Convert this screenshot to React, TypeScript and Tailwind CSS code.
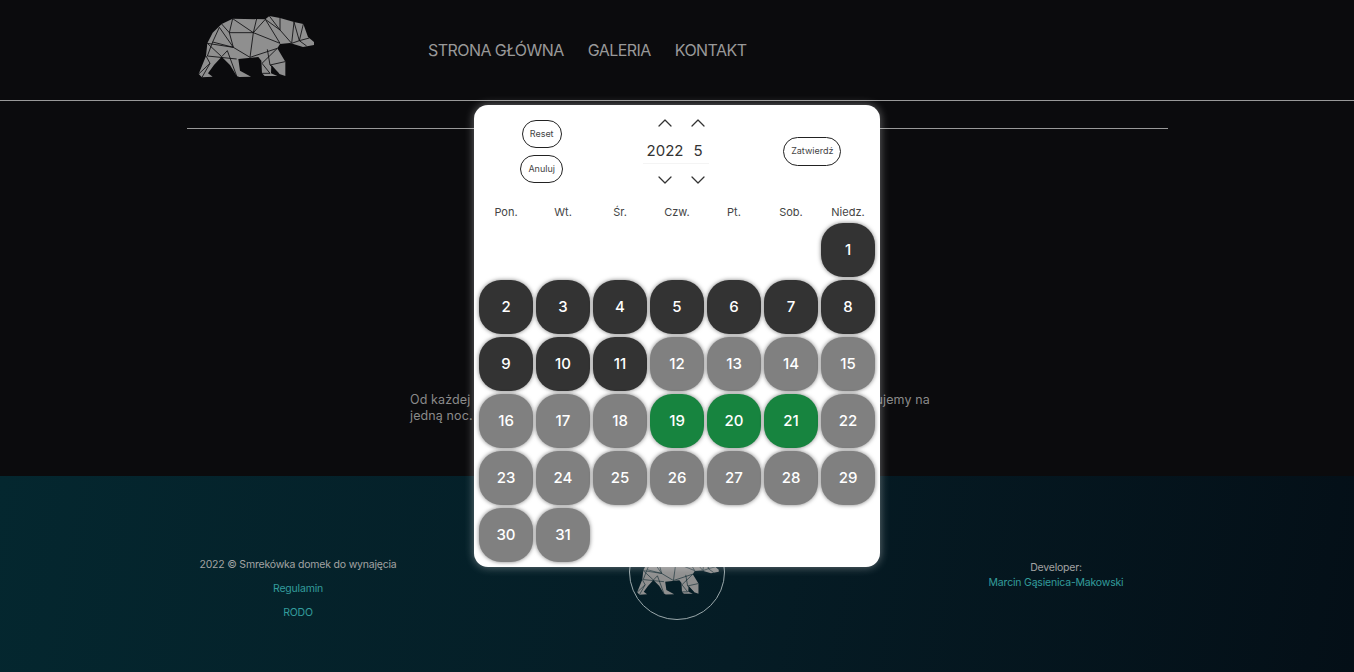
import React from 'react';
import { ChevronUp, ChevronDown } from 'lucide-react';

const weekDays = ['Pon.', 'Wt.', 'Śr.', 'Czw.', 'Pt.', 'Sob.', 'Niedz.'];
const days = Array.from({ length: 31 }, (_, i) => i + 1);

const dayColor = (day: number): string => {
  if (day >= 19 && day <= 21) return 'bg-[#17843f]';
  if (day <= 11) return 'bg-[#333333]';
  return 'bg-[#808080]';
};

// Low-poly bear, traced from the logo
const BearLogo = ({ className, line }: { className: string; line: string }) => (
  <svg viewBox="0 0 390 216" className={className} aria-hidden="true">
    <path
      fill="#8f8f8f"
      d="M372 96 L354 81 L340 42 L312 36 L270 24 L238 18 L226 28 L128 26 L95 42 L68 68 L52 100 L48 138 L26 192 L36 202 L68 200 L54 190 L72 165 L95 140 L120 165 L140 198 L148 201 L183 200 L150 182 L145 147 L205 141 L214 152 L216 190 L224 198 L262 198 L243 190 L244 164 L268 192 L286 198 L286 155 L262 115 L270 102 L300 99 L339 111 L372 105 Z"
    />
    <path
      fill="none"
      stroke={line}
      strokeWidth="2.5"
      d="M128 26 L118 68 L95 42 M128 26 L190 68 L200 26 M190 68 L226 28 L270 100 L190 68 M118 68 L190 68 L180 142 M118 68 L130 112 L88 52 M130 112 L180 142 L262 115 M130 112 L52 100 M88 52 L68 96 L130 112 M68 96 L52 138 L140 147 M52 100 L95 140 L112 122 L140 198 M48 138 L60 160 L36 202 M60 160 L26 192 M238 18 L270 60 L305 100 L312 36 M270 24 L270 60 L226 28 M312 36 L328 92 L305 100 M340 42 L328 92 L358 84 M328 92 L350 108 M262 115 L216 160 L240 190 L216 190 M232 118 L240 165 L285 155 M240 165 L268 192"
    />
  </svg>
);

const PillButton = ({ label, className }: { label: string; className: string }) => (
  <button className={`flex items-center justify-center rounded-full border-[1.5px] border-[#222222] text-[9px] text-[#444444] ${className}`}>
    {label}
  </button>
);

const Spinner = ({ value, className }: { value: string; className: string }) => (
  <div className={`flex flex-col items-center ${className}`}>
    <ChevronUp className="w-6 h-6 text-[#333333]" strokeWidth={1.25} />
    <div className="h-[24px] w-full mt-[5px] mb-[4px] flex items-center justify-center text-[15px] text-[#333333] border-b border-[#f4f4f4]">
      {value}
    </div>
    <ChevronDown className="w-6 h-6 text-[#333333]" strokeWidth={1.25} />
  </div>
);

const CalendarModal = () => (
  <div className="absolute left-[474px] top-[105px] w-[406px] h-[462px] px-[5px] rounded-[14px] bg-white shadow-[0_0_10px_rgba(255,255,255,0.4)]">
    <div className="grid grid-cols-3 items-center h-[92px] -mx-[5px]">
      <div className="flex flex-col items-center gap-[7px]">
        <PillButton label="Reset" className="w-10 h-7" />
        <PillButton label="Anuluj" className="w-[43px] h-7" />
      </div>
      <div className="flex justify-center mr-[2px]">
        <Spinner value="2022" className="w-[44px]" />
        <Spinner value="5" className="w-[22px]" />
      </div>
      <div className="flex justify-center">
        <PillButton label="Zatwierdź" className="w-[58px] h-[29px]" />
      </div>
    </div>
    <div className="grid grid-cols-7 gap-x-[3px] h-[26px] pt-[4px] items-center">
      {weekDays.map((name) => (
        <div key={name} className="text-center text-[11px] text-[#444444]">
          {name}
        </div>
      ))}
    </div>
    <div className="grid grid-cols-7 gap-[3px]">
      {days.map((day) => (
        <div
          key={day}
          style={day === 1 ? { gridColumnStart: 7 } : undefined}
          className={`h-[54px] rounded-[22px] flex items-center justify-center text-[15px] font-[450] text-white shadow-[0_0_4px_rgba(0,0,0,0.5)] ${dayColor(day)}`}
        >
          {day}
        </div>
      ))}
    </div>
  </div>
);

export default function App() {
  return (
    <div className="relative h-[672px] overflow-hidden flex flex-col bg-[#0b0b0d] font-['Inter',sans-serif]">
      <header className="h-[101px] shrink-0 border-b border-[#999999]">
        <div className="flex items-center h-full pl-[198px]">
          <BearLogo className="w-[130px] h-[72px] -ml-[8px] -mt-[9px]" line="#0b0b0d" />
          <nav className="flex items-center gap-6 ml-[108px] text-[16px] tracking-[-0.55px] text-[#999999]">
            <a>STRONA GŁÓWNA</a>
            <a>GALERIA</a>
            <a>KONTAKT</a>
          </nav>
        </div>
      </header>

      <main className="flex-1 flex flex-col items-center">
        <div className="w-[981px] mt-[27px] border-t border-[#999999]" />
        <p className="w-[526px] mr-[8px] mt-[263px] text-[12.5px] leading-4 tracking-[0.12px] text-[#8a8a8a]">
          Od każdej dokonanej rezerwacji pobieramy zadatek, dni w kalendarzu rezerwujemy na jedną noc.
        </p>
      </main>

      <footer className="h-[196px] shrink-0 bg-[linear-gradient(100deg,#04272f_0%,#051c25_55%,#040f17_100%)] flex justify-center items-center">
        <div className="w-[1137px] grid grid-cols-3 items-center text-center text-[10.5px] tracking-[-0.2px]">
          <div className="flex flex-col gap-[9px] leading-[15px] pt-[28px]">
            <span className="text-[#a3a3a3]">2022 © Smrekówka domek do wynajęcia</span>
            <a className="text-[#339c9c]">Regulamin</a>
            <a className="text-[#339c9c]">RODO</a>
          </div>
          <div className="flex justify-center">
            <div className="w-24 h-24 mb-[4px] rounded-full border border-[#9aa8ab] flex items-center justify-center">
              <BearLogo className="w-[92px] h-[51px] shrink-0" line="#07222b" />
            </div>
          </div>
          <div className="flex flex-col leading-[15px] pt-[2px]">
            <span className="text-[#a3a3a3]">Developer:</span>
            <a className="text-[#339c9c]">Marcin Gąsienica-Makowski</a>
          </div>
        </div>
      </footer>

      <CalendarModal />
    </div>
  );
}
